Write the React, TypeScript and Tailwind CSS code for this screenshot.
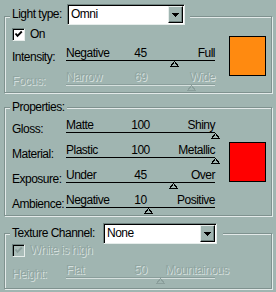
import React from 'react'

const DIS = 'text-[#91a6a2] [text-shadow:1px_1px_0_#d6e0de]'

function Thumb({ x, disabled }: { x: number; disabled?: boolean }) {
  return (
    <svg
      className="absolute top-[14px]"
      style={{ left: x - 4 }}
      width="9"
      height="6"
      viewBox="0 0 9 6"
      shapeRendering="crispEdges"
    >
      <polygon points="4.5,0.5 8.5,5.5 0.5,5.5" fill="#a0b5b1" stroke={disabled ? '#8a9e9b' : '#000'} strokeWidth="1" />
    </svg>
  )
}

function Slider({ left, mid, right, pos, disabled }: { left: string; mid: string; right: string; pos: number; disabled?: boolean }) {
  return (
    <div className="relative h-[20px] w-[149px]">
      <div className={`grid h-[13px] grid-cols-3 leading-[13px] ${disabled ? DIS : ''}`}>
        <span className="whitespace-nowrap">{left}</span>
        <span className="text-center">{mid}</span>
        <span className="whitespace-nowrap text-right">{right}</span>
      </div>
      {disabled ? (
        <div className="h-px w-full bg-[#8a9e9b] shadow-[0_1px_0_#d6e0de]" />
      ) : (
        <div className="h-px w-full bg-black" />
      )}
      <Thumb x={pos} disabled={disabled} />
    </div>
  )
}

function Row({ label, h, disabled, children }: { label: string; h: string; disabled?: boolean; children: React.ReactNode }) {
  return (
    <div className={`flex ${h}`}>
      <span className={`w-[54px] whitespace-nowrap pt-[4px] ${disabled ? DIS : ''}`}>{label}</span>
      {children}
    </div>
  )
}

function Check({ label, disabled }: { label: string; disabled?: boolean }) {
  return (
    <div className="flex h-[13px] items-center gap-[5px]">
      <div
        className={`flex h-[13px] w-[13px] items-center justify-center border border-t-[#6f827f] border-l-[#6f827f] border-r-[#e6edeb] border-b-[#e6edeb] shadow-[inset_1px_1px_0_#000] ${disabled ? 'bg-[#a9bcb8]' : 'bg-white'}`}
      >
        <svg width="9" height="9" viewBox="0 0 9 9">
          <path d="M1.5 3.5 L3.5 5.8 L7.8 1.5" fill="none" stroke={disabled ? '#8a9e9b' : '#000'} strokeWidth="1.9" />
        </svg>
      </div>
      <span className={`whitespace-nowrap ${disabled ? DIS : ''}`}>{label}</span>
    </div>
  )
}

function Combo({ value, w }: { value: string; w: string }) {
  return (
    <div className={`flex h-[21px] ${w} items-stretch border border-t-[#6f827f] border-l-[#6f827f] border-r-[#e6edeb] border-b-[#e6edeb] bg-white shadow-[inset_1px_1px_0_#000]`}>
      <span className="flex-1 pl-[3px] pt-[3px] leading-[13px]">{value}</span>
      <div className="my-[1px] mr-[1px] flex w-[15px] items-center justify-center border border-t-[#e6edeb] border-l-[#e6edeb] border-r-black border-b-black bg-[#a0b5b1] shadow-[inset_-1px_-1px_0_#6f827f]">
        <svg width="7" height="4" viewBox="0 0 7 4" shapeRendering="crispEdges">
          <polygon points="0,0 7,0 3.5,4" fill="#000" />
        </svg>
      </div>
    </div>
  )
}

const GROUP = 'ml-[4px] w-[268px] border border-[#7f928f] shadow-[inset_1px_1px_0_#e3eae9,1px_1px_0_#e3eae9]'

export default function App() {
  return (
    <div className="h-[292px] w-[276px] overflow-hidden bg-[#a0b5b1] pt-[4px] font-['Liberation_Sans',Arial,sans-serif] text-[12px] leading-[13px] tracking-[-0.5px] text-black">
      {/* Light */}
      <div className={`${GROUP} mt-[12px] h-[77px]`}>
        <div className="-mt-[13px] ml-[5px] flex h-[21px] w-fit items-center bg-[#a0b5b1] pl-[2px] pr-[5px]">
          <span className="w-[55px] whitespace-nowrap">Light type:</span>
          <Combo value="Omni" w="w-[118px]" />
        </div>
        <div className="flex items-start pl-[7px]">
          <div className="pt-[3px]">
            <Check label="On" />
            <div className="mt-[6px]">
              <Row label="Intensity:" h="h-[24px]">
                <Slider left="Negative" mid="45" right="Full" pos={108} />
              </Row>
              <Row label="Focus:" h="h-[20px]" disabled>
                <Slider left="Narrow" mid="69" right="Wide" pos={125} disabled />
              </Row>
            </div>
          </div>
          <div className="ml-[14px] mt-[11px] h-[40px] w-[37px] border border-black bg-[#ff8a10]" />
        </div>
      </div>

      {/* Properties */}
      <div className={`${GROUP} mt-[14px] h-[109px]`}>
        <div className="-mt-[7px] ml-[5px] h-[13px] w-fit whitespace-nowrap bg-[#a0b5b1] px-[2px]">Properties:</div>
        <div className="flex items-start pl-[7px]">
          <div className="pt-[5px]">
            <Row label="Gloss:" h="h-[25px]">
              <Slider left="Matte" mid="100" right="Shiny" pos={149} />
            </Row>
            <Row label="Material:" h="h-[25px]">
              <Slider left="Plastic" mid="100" right="Metallic" pos={149} />
            </Row>
            <Row label="Exposure:" h="h-[25px]">
              <Slider left="Under" mid="45" right="Over" pos={107} />
            </Row>
            <Row label="Ambience:" h="h-[20px]">
              <Slider left="Negative" mid="10" right="Positive" pos={82} />
            </Row>
          </div>
          <div className="ml-[14px] mt-[28px] h-[40px] w-[37px] border border-black bg-[#ff0000]" />
        </div>
      </div>

      {/* Texture */}
      <div className={`${GROUP} mt-[17px] h-[56px]`}>
        <div className="-mt-[11px] ml-[5px] flex h-[21px] w-fit items-center bg-[#a0b5b1] pl-[2px] pr-[6px]">
          <span className="w-[91px] whitespace-nowrap">Texture Channel:</span>
          <Combo value="None" w="w-[114px]" />
        </div>
        <div className="pl-[7px]">
          <Check label="White is high" disabled />
          <div className="mt-[7px]">
            <Row label="Height:" h="h-[20px]" disabled>
              <Slider left="Flat" mid="50" right="Mountainous" pos={94} disabled />
            </Row>
          </div>
        </div>
      </div>
    </div>
  )
}
